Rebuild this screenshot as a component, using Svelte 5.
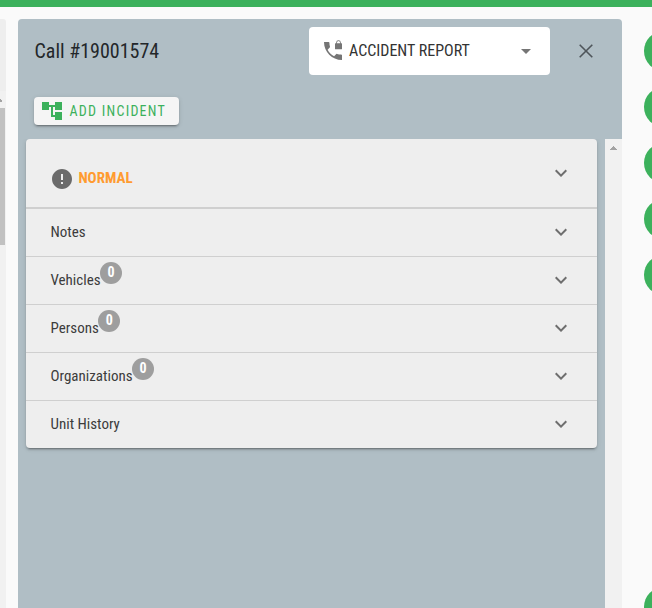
<script>
  const sections = [
    { label: 'Notes' },
    { label: 'Vehicles', count: 0 },
    { label: 'Persons', count: 0 },
    { label: 'Organizations', count: 0 },
    { label: 'Unit History' }
  ];
  const actions = [1, 2, 3, 4, 5];
</script>

{#snippet chevron()}
  <svg class="chevron" viewBox="0 0 24 24"><path d="M7.41 8.59 12 13.17l4.59-4.58L18 10l-6 6-6-6z" /></svg>
{/snippet}

<div class="screen">
  <div class="topbar"></div>
  <div class="body">
    <aside class="side">
      <div class="side-head"></div>
      <div class="side-track">
        <svg width="6" height="17" viewBox="0 0 6 17"><path d="M0 8h1v1h1v2H0z" fill="#a3a3a3" /></svg>
        <div class="thumb"></div>
      </div>
    </aside>

    <main class="panel">
      <header>
        <h1>Call #19001574</h1>
        <div class="select">
          <svg class="phone" viewBox="0 0 18 20"><path d="M0 2h4.6q.8 0 .8.8c0 1.4.2 2.7.6 3.9q.1.5-.3.9L3.6 9.8c1.4 2.8 3.7 5.1 6.5 6.5l2.2-2.2q.4-.4.9-.2c1.2.4 2.5.6 3.800.6q1 0 1 .8V20C8 20 0 12 0 2z" /><path d="M11.500 3.200h.7V2.600a2.300 2.300 0 0 1 4.600 0v.6h.7q.5 0 .5.500V8.700q0 .500-.500.500h-6q-.500 0-.500-.500V3.700q0-.500.500-.500zm1.500 0h3V2.600a1.500 1.500 0 0 0-3 0z" /></svg>
          <span>ACCIDENT REPORT</span>
          <svg class="caret" viewBox="0 0 10 5"><path d="M0 0h10L5 5z" /></svg>
        </div>
        <svg class="close" viewBox="0 0 14 14"><path d="M.7.7l12.6 12.6M13.3.7L.7 13.3" /></svg>
      </header>

      <button class="add">
        <svg viewBox="0 0 24 24"><path d="M22 11V3h-7v3H9V3H2v8h7V8h2v10h4v3h7v-8h-7v3h-2V8h2v3z" /></svg>
        <span>ADD INCIDENT</span>
      </button>

      <div class="scroll">
        <section class="card">
          <div class="row first">
            <svg class="alert" viewBox="0 0 24 24"><path d="M12 2C6.48 2 2 6.48 2 12s4.48 10 10 10 10-4.48 10-10S17.52 2 12 2zm1 15h-2v-2h2v2zm0-4h-2V7h2v6z" /></svg>
            <span class="status">NORMAL</span>
            {@render chevron()}
          </div>
          {#each sections as s}
            <div class="row">
              <span class="label">{s.label}</span>
              {#if s.count !== undefined}<span class="badge">{s.count}</span>{/if}
              {@render chevron()}
            </div>
          {/each}
        </section>
        <div class="track">
          <svg width="17" height="17" viewBox="0 0 17 17"><path d="M8 7h1v1h1v1h1v1h1v1H5v-1h1V9h1V8h1z" fill="#a3a3a3" /></svg>
        </div>
      </div>
    </main>

    <nav class="actions">
      {#each actions as a (a)}<div class="fab"></div>{/each}
      <div class="fab last"></div>
    </nav>
  </div>
</div>

<style>
  :global(body) { margin: 0; }
  .screen {
    width: 652px; height: 608px; overflow: hidden;
    display: flex; flex-direction: column;
    background: #fafafa; color: #2e3133;
    font-family: "Roboto Condensed", Roboto, sans-serif;
    font-stretch: 75%;
  }
  svg { display: block; flex: none; }
  .topbar { height: 7px; flex: none; background: #3cb15c; }
  .body { flex: 1; min-height: 0; display: flex; padding-top: 12px; }
  .side { width: 6px; margin-right: 12px; display: flex; flex-direction: column; border-top-right-radius: 3px; overflow: hidden; background: #eee; }
  .side-head { height: 72px; }
  .side-track { flex: 1; background: #f1f1f1; }
  .thumb { width: 5px; height: 137px; background: #c1c1c1; }
  .panel { width: 604px; flex: none; background: #b0bec5; border-radius: 4px 4px 0 0; display: flex; flex-direction: column; align-items: flex-start; }
  header { height: 64px; width: 100%; display: flex; align-items: center; box-sizing: border-box; padding-left: 16.5px; flex: none; }
  h1 { margin: 0; width: 274.5px; font-size: 20px; line-height: 32px; font-weight: 400; color: #23272a; white-space: nowrap; }
  .select { width: 241px; height: 48px; box-sizing: border-box; background: #fff; border-radius: 4px; display: flex; align-items: center; padding: 0 19px 0 15px; font-size: 16px; color: #333; white-space: nowrap; }
  .select span { margin-left: 7px; flex: 1; padding-bottom: 2px; }
  .phone { width: 18px; height: 20px; margin-top: -2px; fill: #757575; }
  .caret { width: 10px; height: 5px; fill: #757575; }
  .close { width: 14px; height: 14px; margin-left: 29px; fill: none; stroke: #4e555a; stroke-width: 1.6; }
  .add { margin: 14px 0 0 16px; width: 145px; height: 28px; flex: none; border: 0; border-radius: 4px; background: #f5f5f5; color: #3cb15c; display: flex; align-items: center; padding: 0 0 0 5.5px; font: inherit; font-size: 14px; letter-spacing: 1.25px; white-space: nowrap; box-shadow: 0 3px 1px -2px rgba(0,0,0,.2), 0 2px 2px rgba(0,0,0,.14), 0 1px 5px rgba(0,0,0,.12); }
  .add svg { width: 24px; height: 24px; margin-right: 6px; fill: currentColor; }
  .scroll { margin-top: 14px; flex: 1; align-self: stretch; min-height: 0; display: flex; align-items: flex-start; overflow: hidden; padding-left: 8px; }
  .card { width: 571px; background: #eee; border-radius: 4px; box-shadow: 0 3px 1px -2px rgba(0,0,0,.2), 0 2px 2px rgba(0,0,0,.14), 0 1px 5px rgba(0,0,0,.12); margin-right: 8px; }
  .row { height: 48px; box-sizing: border-box; display: flex; align-items: center; padding: 0 24px 1px 24.5px; border-top: 1px solid #cfcfcf; font-size: 15px; color: #3c3c3c; }
  .row.first { height: 69px; padding: 0 24px 0 24px; border-top: 0; border-bottom: 1px solid #cfcfcf; }
  .chevron { width: 24px; height: 24px; margin-left: auto; fill: #6e6e6e; }
  .alert { width: 24px; height: 24px; margin-top: 11px; fill: #6b6b6b; }
  .status { margin: 10px 0 0 4.4px; color: #ff9b30; font-weight: 700; font-size: 15px; }
  .badge { width: 22px; height: 22px; margin: 0 0 14px -.6px; border-radius: 50%; background: #9e9e9e; color: #fff; font-size: 14px; font-weight: 700; line-height: 21px; text-align: center; }
  .track { width: 17px; align-self: stretch; background: #f1f1f1; }
  .actions { width: 8px; margin-left: 22px; flex: 1; display: flex; flex-direction: column; gap: 16px; padding-top: 12px; }
  .fab { width: 40px; height: 40px; flex: none; border-radius: 50%; background: #3cb15c; }
  .last { margin-top: 276px; }
</style>
